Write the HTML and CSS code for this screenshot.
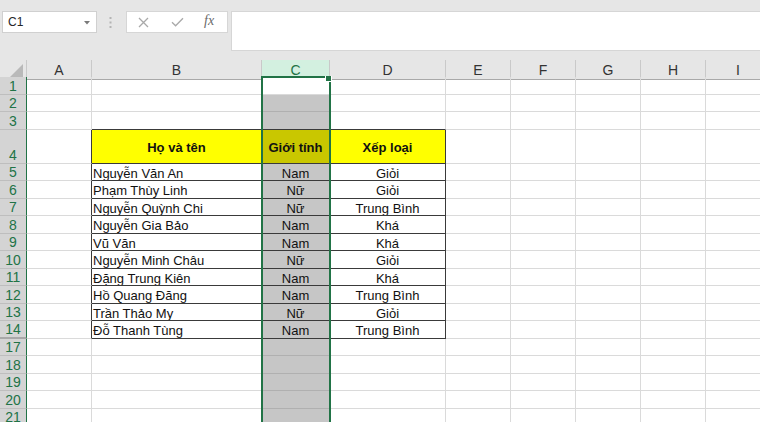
FILE: index.html
```html
<!DOCTYPE html>
<html lang="vi">
<head>
<meta charset="utf-8">
<title>Excel</title>
<link rel="stylesheet" href="styles.css">
</head>
<body>
<div class="toolbar">
  <div class="namebox"><span>C1</span><svg class="dd" width="6" height="4" viewBox="0 0 6 4"><path d="M0 0H6L3 3.5Z" fill="#7a7a7a"/></svg></div>
  <div class="grip"><svg width="3" height="11" viewBox="0 0 3 11"><rect x="0.5" y="0" width="2" height="2" fill="#b4b4b4"/><rect x="0.5" y="4.5" width="2" height="2" fill="#b4b4b4"/><rect x="0.5" y="9" width="2" height="2" fill="#b4b4b4"/></svg></div>
  <div class="fxbox">
    <svg class="ic ic-x" width="11" height="11" viewBox="0 0 11 11"><path d="M1 1L10 10M10 1L1 10" stroke="#a9a9a9" stroke-width="1.3" fill="none"/></svg>
    <svg class="ic ic-ok" width="13" height="10" viewBox="0 0 13 10"><path d="M1 5.2L4.6 8.8L12 1.2" stroke="#a9a9a9" stroke-width="1.3" fill="none"/></svg>
    <span class="fx">fx</span>
  </div>
  <div class="finput"></div>
</div>

<div class="sheet">
  <div class="row hh">
    <div class="corner"><svg width="14" height="13" viewBox="0 0 14 13"><path d="M13 0V13H0Z" fill="#b9b9b9"/></svg></div>
    <div class="ch">A</div><div class="ch">B</div><div class="ch on">C</div><div class="ch">D</div><div class="ch">E</div><div class="ch">F</div><div class="ch">G</div><div class="ch">H</div><div class="ch">I</div>
  </div>

  <div class="row h18"><div class="rh">1</div><div class="c"></div><div class="c"></div><div class="c act"></div><div class="c"></div><div class="c"></div><div class="c"></div><div class="c"></div><div class="c"></div><div class="c"></div></div>
  <div class="row h17"><div class="rh">2</div><div class="c"></div><div class="c"></div><div class="c sel"></div><div class="c"></div><div class="c"></div><div class="c"></div><div class="c"></div><div class="c"></div><div class="c"></div></div>
  <div class="row h18"><div class="rh">3</div><div class="c"></div><div class="c tt"></div><div class="c sel tt"></div><div class="c tt"></div><div class="c"></div><div class="c"></div><div class="c"></div><div class="c"></div><div class="c"></div></div>
  <div class="row h34"><div class="rh">4</div><div class="c tl"></div><div class="c tb hd">Họ và tên</div><div class="c tb hd sel">Giới tính</div><div class="c tb hd">Xếp loại</div><div class="c"></div><div class="c"></div><div class="c"></div><div class="c"></div><div class="c"></div></div>
  <div class="row h17"><div class="rh">5</div><div class="c tl"></div><div class="c tb l">Nguyễn Văn An</div><div class="c tb m sel">Nam</div><div class="c tb m">Giỏi</div><div class="c"></div><div class="c"></div><div class="c"></div><div class="c"></div><div class="c"></div></div>
  <div class="row h18"><div class="rh">6</div><div class="c tl"></div><div class="c tb l">Phạm Thùy Linh</div><div class="c tb m sel">Nữ</div><div class="c tb m">Giỏi</div><div class="c"></div><div class="c"></div><div class="c"></div><div class="c"></div><div class="c"></div></div>
  <div class="row h17"><div class="rh">7</div><div class="c tl"></div><div class="c tb l">Nguyễn Quỳnh Chi</div><div class="c tb m sel">Nữ</div><div class="c tb m">Trung Bình</div><div class="c"></div><div class="c"></div><div class="c"></div><div class="c"></div><div class="c"></div></div>
  <div class="row h18"><div class="rh">8</div><div class="c tl"></div><div class="c tb l">Nguyễn Gia Bảo</div><div class="c tb m sel">Nam</div><div class="c tb m">Khá</div><div class="c"></div><div class="c"></div><div class="c"></div><div class="c"></div><div class="c"></div></div>
  <div class="row h17"><div class="rh">9</div><div class="c tl"></div><div class="c tb l">Vũ Văn</div><div class="c tb m sel">Nam</div><div class="c tb m">Khá</div><div class="c"></div><div class="c"></div><div class="c"></div><div class="c"></div><div class="c"></div></div>
  <div class="row h18"><div class="rh">10</div><div class="c tl"></div><div class="c tb l">Nguyễn Minh Châu</div><div class="c tb m sel">Nữ</div><div class="c tb m">Giỏi</div><div class="c"></div><div class="c"></div><div class="c"></div><div class="c"></div><div class="c"></div></div>
  <div class="row h17"><div class="rh">11</div><div class="c tl"></div><div class="c tb l">Đặng Trung Kiên</div><div class="c tb m sel">Nam</div><div class="c tb m">Khá</div><div class="c"></div><div class="c"></div><div class="c"></div><div class="c"></div><div class="c"></div></div>
  <div class="row h18"><div class="rh">12</div><div class="c tl"></div><div class="c tb l">Hồ Quang Đăng</div><div class="c tb m sel">Nam</div><div class="c tb m">Trung Bình</div><div class="c"></div><div class="c"></div><div class="c"></div><div class="c"></div><div class="c"></div></div>
  <div class="row h17"><div class="rh">13</div><div class="c tl"></div><div class="c tb l">Trần Thảo My</div><div class="c tb m sel">Nữ</div><div class="c tb m">Giỏi</div><div class="c"></div><div class="c"></div><div class="c"></div><div class="c"></div><div class="c"></div></div>
  <div class="row h18"><div class="rh hid">14</div><div class="c tl"></div><div class="c tb l">Đỗ Thanh Tùng</div><div class="c tb m sel">Nam</div><div class="c tb m">Trung Bình</div><div class="c"></div><div class="c"></div><div class="c"></div><div class="c"></div><div class="c"></div></div>
  <div class="row h17"><div class="rh">17</div><div class="c"></div><div class="c"></div><div class="c sel"></div><div class="c"></div><div class="c"></div><div class="c"></div><div class="c"></div><div class="c"></div><div class="c"></div></div>
  <div class="row h18"><div class="rh">18</div><div class="c"></div><div class="c"></div><div class="c sel"></div><div class="c"></div><div class="c"></div><div class="c"></div><div class="c"></div><div class="c"></div><div class="c"></div></div>
  <div class="row h17"><div class="rh">19</div><div class="c"></div><div class="c"></div><div class="c sel"></div><div class="c"></div><div class="c"></div><div class="c"></div><div class="c"></div><div class="c"></div><div class="c"></div></div>
  <div class="row h18"><div class="rh">20</div><div class="c"></div><div class="c"></div><div class="c sel"></div><div class="c"></div><div class="c"></div><div class="c"></div><div class="c"></div><div class="c"></div><div class="c"></div></div>
  <div class="row h17"><div class="rh">21</div><div class="c"></div><div class="c"></div><div class="c sel"></div><div class="c"></div><div class="c"></div><div class="c"></div><div class="c"></div><div class="c"></div><div class="c"></div></div>

  <div class="selbox"><span class="handle"></span></div>
</div>
</body>
</html>
```

FILE: styles.css
```css
html, body {
  margin: 0;
  padding: 0;
  width: 760px;
  height: 422px;
  overflow: hidden;
  background: #ffffff;
  font-family: "Liberation Sans", Arial, sans-serif;
}

/* ---------- formula bar ---------- */
.toolbar {
  height: 60px;
  box-sizing: border-box;
  padding: 11px 0 0 2px;
  display: flex;
  align-items: flex-start;
  background: #e6e6e6;
}
.namebox {
  width: 95px;
  height: 22px;
  box-sizing: border-box;
  background: #fff;
  border: 1px solid #d0d0d0;
  display: flex;
  align-items: center;
  justify-content: space-between;
  padding: 0 6px 0 5px;
  font-size: 12px;
  color: #262626;
}
.namebox .dd { margin-top: 1px; }
.grip {
  width: 29px;
  height: 22px;
  display: flex;
  align-items: center;
  justify-content: center;
  box-sizing: border-box;
  padding-right: 2px;
}
.fxbox {
  width: 102px;
  height: 22px;
  box-sizing: border-box;
  background: #fff;
  border: 1px solid #d6d6d6;
  display: flex;
  align-items: center;
}
.ic-x { margin-left: 11px; }
.ic-ok { margin-left: 22px; }
.fx {
  margin-left: 20px;
  font-family: "Liberation Serif", "Times New Roman", serif;
  font-style: italic;
  font-size: 14px;
  color: #6a6a6a;
  line-height: 1;
  margin-top: -2px;
}
.finput {
  flex: 1;
  margin-left: 3px;
  height: 40px;
  box-sizing: border-box;
  background: #fff;
  border: 1px solid #d6d6d6;
  border-right: none;
}

/* ---------- sheet ---------- */
.sheet {
  position: relative;
  height: 362px;
  overflow: hidden;
}
.row {
  display: grid;
  grid-template-columns: 27px 65px 170px 68px 116px 65px 65px 65px 65px 65px;
  width: 791px;
}
.hh { height: 17px; }
.h17 { height: 17px; }
.h18 { height: 18px; }
.h34 { height: 34px; }

.corner {
  box-sizing: border-box;
  background: #e6e6e6;
  border-right: 1px solid #c9c9c9;
  border-bottom: 1px solid #a9a9a9;
  display: flex;
  align-items: flex-end;
  justify-content: flex-end;
  padding: 0 2px 2px 0;
}
.ch {
  box-sizing: border-box;
  background: #e6e6e6;
  border-right: 1px solid #c9c9c9;
  border-bottom: 1px solid #a9a9a9;
  font-size: 14px;
  color: #333;
  display: flex;
  align-items: center;
  justify-content: center;
  padding-top: 2px;
  line-height: 15px;
}
.ch.on {
  background: #d3f0e0;
  color: #217346;
  border-bottom: 2px solid #217346;
  padding-top: 3px;
}

.rh {
  box-sizing: border-box;
  background: #d4d4d4;
  border-right: 1px solid #217346;
  border-bottom: 1px solid #bebebe;
  color: #217346;
  font-size: 14px;
  display: flex;
  align-items: flex-end;
  justify-content: center;
  padding-bottom: 0;
  line-height: 16px;
}
.rh.hid { border-bottom: 2px solid #a8a8a8; }

.c {
  box-sizing: border-box;
  border-right: 1px solid #dadada;
  border-bottom: 1px solid #dadada;
  font-size: 13px;
  color: #111;
  display: flex;
  align-items: center;
  white-space: nowrap;
  overflow: hidden;
  line-height: 15px;
}
.c.sel {
  background: #c6c6c6;
  border-bottom-color: #b0b0b0;
}
.c.act { background: #fff; }

.c.tl { border-right-color: #3a3a3a; }
.c.tt { border-bottom-color: #3a3a3a; }
.c.tb {
  border-right-color: #3a3a3a;
  border-bottom-color: #3a3a3a;
}
.c.l { padding-left: 1px; padding-top: 2px; }
.c.m { justify-content: center; padding-top: 2px; }
.c.hd {
  background: #ffff00;
  font-weight: bold;
  justify-content: center;
  padding-top: 2px;
}
.c.hd.sel { background: #c9c700; }

.selbox {
  position: absolute;
  left: 261px;
  top: 16px;
  width: 70px;
  height: 360px;
  box-sizing: border-box;
  border: 2px solid #217346;
  border-bottom: none;
  pointer-events: none;
}
.handle {
  position: absolute;
  right: -3px;
  top: -2px;
  width: 5px;
  height: 5px;
  background: #217346;
  border: 1px solid #fff;
  border-top: none;
}
```
